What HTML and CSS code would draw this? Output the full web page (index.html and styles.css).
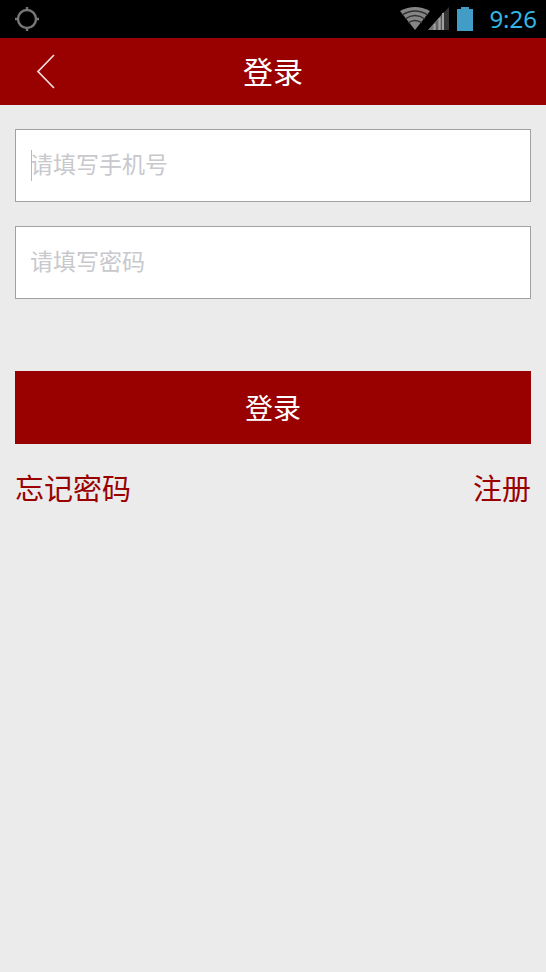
FILE: index.html
```html
<!DOCTYPE html>
<html lang="zh-CN">
<head>
<meta charset="utf-8">
<meta name="viewport" content="width=device-width, initial-scale=1">
<title>登录</title>
<link rel="stylesheet" href="styles.css">
</head>
<body>
<div class="status">
  <svg class="gps" width="26" height="26" viewBox="0 0 26 26" fill="none" stroke="#777" stroke-width="2.400" aria-hidden="true">
    <circle cx="13" cy="13" r="9"/>
    <path d="M13 1v4M13 21v4M1 13h4M21 13h4"/>
  </svg>
  <div class="signals">
    <svg width="50" height="26" viewBox="0 0 50 26" aria-hidden="true">
      <path d="M1 5Q16-3 31 5L16 24Z" fill="#858585"/>
      <path d="M3 9Q16 1 29 9M6 13Q16 6 26 13M9 17Q16 12 23 17" fill="none" stroke="#303030" stroke-width="1.4"/>
      <path d="M29 24L50 1V24Z" fill="#343434"/>
      <path d="M29 24L45 6V24Z" fill="#777"/>
      <path d="M35.500 18V24M40.500 12V24M44 7V24" stroke="#a0a0a0" stroke-width="2"/>
      <path d="M38 15V24M42.500 9V24" stroke="#555" stroke-width="1"/>
    </svg>
    <svg width="16" height="26" viewBox="0 0 16 26" aria-hidden="true">
      <path d="M4 1h8v2h4v22H0V3h4Z" fill="#429dc6"/>
    </svg>
    <time class="clock">9:26</time>
  </div>
</div>
<header class="bar">
  <button class="back" type="button" aria-label="返回">
    <svg width="20" height="36" viewBox="0 0 20 36" fill="none" stroke="#f3dede" stroke-width="1.700" aria-hidden="true"><path d="M18 1L2 17.500L18 34"/></svg>
  </button>
  <h1 class="title">登录</h1>
</header>
<main>
  <form class="form">
    <div class="field field-active">
      <input class="input" type="tel" placeholder="请填写手机号" aria-label="手机号">
    </div>
    <div class="field">
      <input class="input" type="password" placeholder="请填写密码" aria-label="密码">
    </div>
    <button class="submit" type="button">登录</button>
    <nav class="links">
      <a href="#forgot">忘记密码</a>
      <a href="#register">注册</a>
    </nav>
  </form>
</main>
</body>
</html>
```

FILE: styles.css
```css
* { box-sizing: border-box; }
body {
  margin: 0;
  min-height: 100vh;
  background: #ebebeb;
  font-family: "Noto Sans", "Noto Sans CJK SC", sans-serif;
}
.status {
  display: flex;
  align-items: center;
  justify-content: space-between;
  height: 38px;
  padding: 0 9px 0 14px;
  background: #000;
}
.status svg { display: block; flex: none; }
.signals { display: flex; align-items: center; gap: 8px; }
.clock {
  margin-left: 8px;
  color: #33b5e5;
  font-size: 24px;
  line-height: 38px;
}
.bar {
  display: grid;
  grid-template-columns: 72px 1fr 72px;
  align-items: center;
  height: 67px;
  background: #900;
}
.back {
  display: flex;
  align-items: center;
  height: 67px;
  padding: 0 0 0 36px;
  border: 0;
  background: none;
}
.title {
  margin: 0;
  color: #fff;
  font-size: 30px;
  font-weight: 400;
  line-height: 66px;
  text-align: center;
}
.form {
  display: flex;
  flex-direction: column;
  gap: 24px;
  padding: 24px 15px;
}
.field {
  position: relative;
  height: 73px;
  border: 1px solid #a0a1a3;
  background: #fff;
}
.field-active::before {
  content: "";
  position: absolute;
  left: 15px;
  top: 20px;
  width: 1px;
  height: 31px;
  background: #b8b8b8;
}
.input {
  display: block;
  width: 100%;
  height: 100%;
  padding: 0 14px 6px;
  border: 0;
  outline: 0;
  background: none;
  color: #333;
  font: 23px "Noto Sans CJK SC", sans-serif;
}
.input::placeholder { color: #c8c8cd; opacity: 1; }
.submit {
  height: 73px;
  margin-top: 48px;
  padding: 0 0 2px;
  border: 0;
  background: #900;
  color: #fff;
  font: 28px "Noto Sans CJK SC", sans-serif;
}
.links {
  display: flex;
  justify-content: space-between;
  font-size: 29px;
  line-height: 42px;
}
.links a { color: #900; text-decoration: none; }
```
